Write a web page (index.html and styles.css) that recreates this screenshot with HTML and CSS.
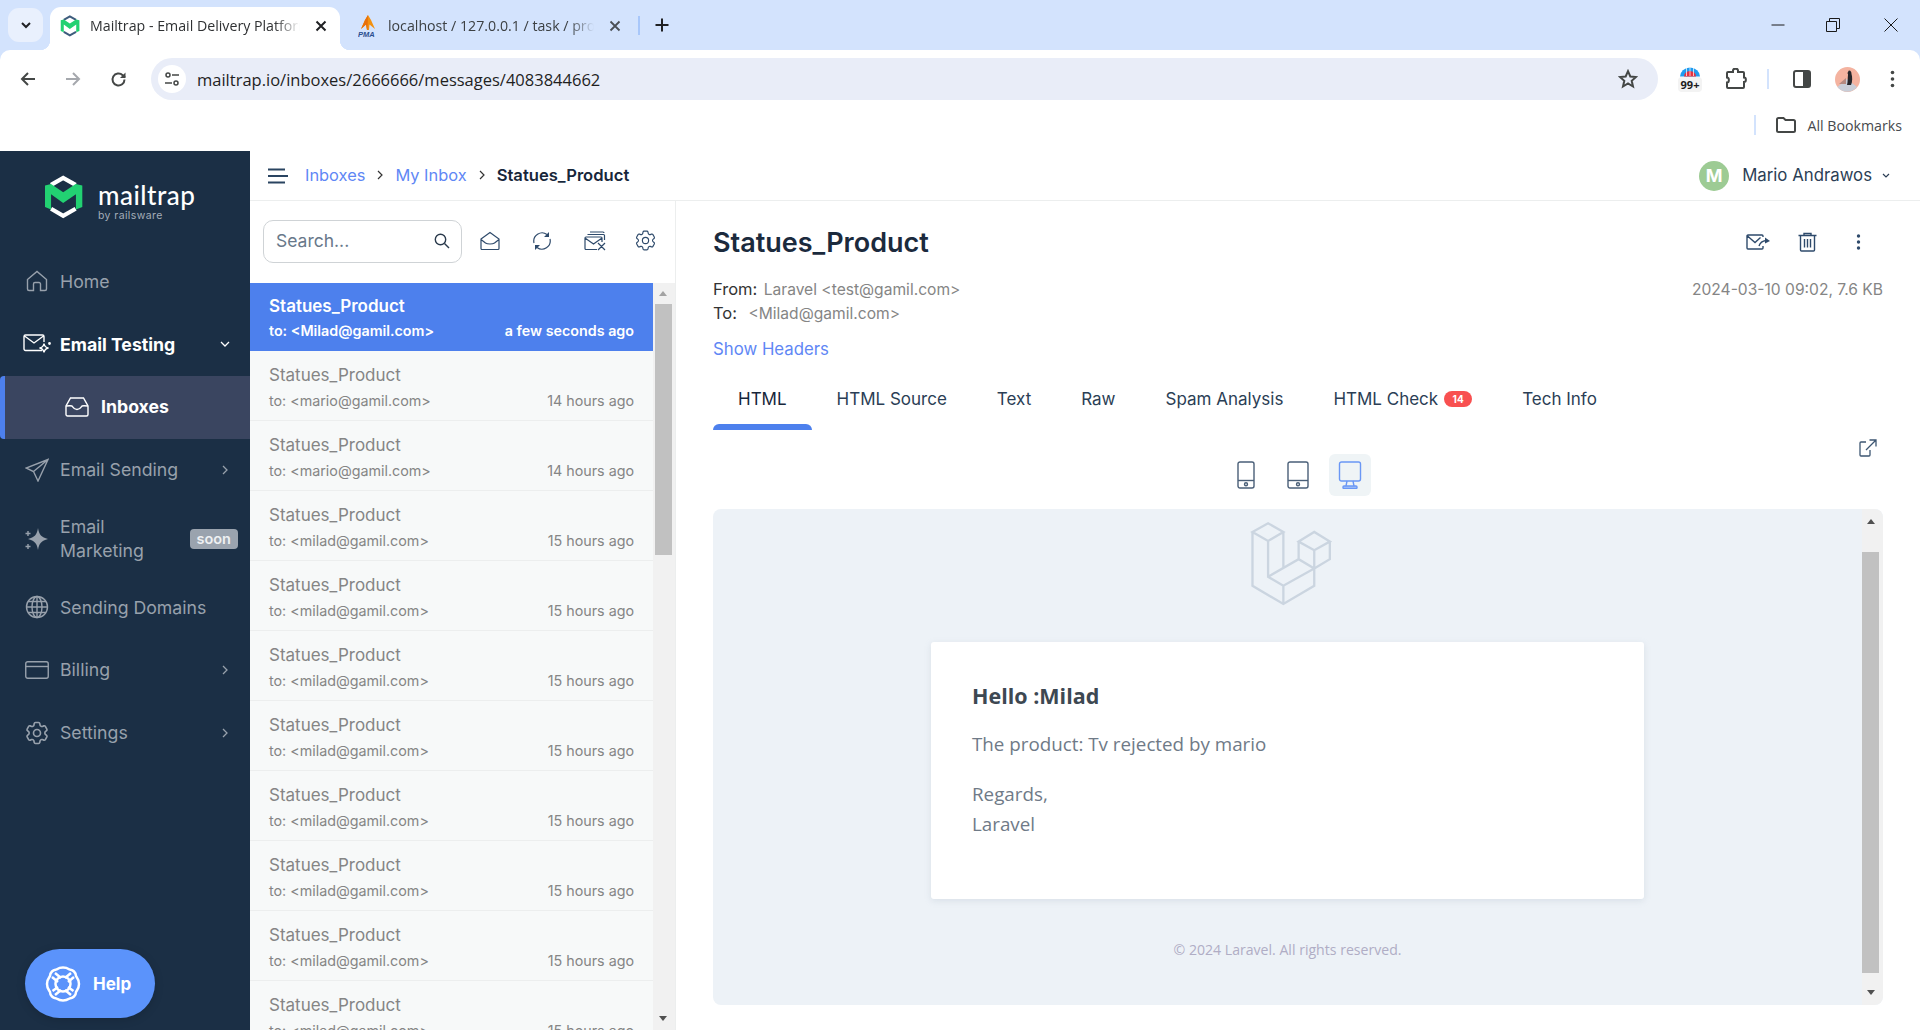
FILE: index.html
```html
<!DOCTYPE html>
<html lang="en">
<head>
    <meta charset="UTF-8">
    <meta name="viewport" content="width=device-width, initial-scale=1.0">
    <title>Mailtrap - Email Delivery Platform</title>
    <link rel="stylesheet" href="styles.css">
</head>
<body>
    <svg class="defs" xmlns="http://www.w3.org/2000/svg">
        <symbol id="gear" viewBox="0 0 24 24">
            <path d="M9.594 3.94c.09-.542.56-.94 1.11-.94h2.593c.55 0 1.02.398 1.11.94l.213 1.281c.063.374.313.686.645.87.074.04.147.083.22.127.325.196.72.257 1.075.124l1.217-.456a1.125 1.125 0 011.37.49l1.296 2.247a1.125 1.125 0 01-.26 1.431l-1.003.827c-.293.24-.438.613-.431.992a6.759 6.759 0 010 .255c-.007.378.138.75.43.99l1.005.828c.424.35.534.954.26 1.43l-1.298 2.247a1.125 1.125 0 01-1.369.491l-1.217-.456c-.355-.133-.75-.072-1.076.124a6.57 6.57 0 01-.22.128c-.331.183-.581.495-.644.869l-.213 1.28c-.09.543-.56.941-1.11.941h-2.594c-.55 0-1.02-.398-1.11-.94l-.213-1.281c-.062-.374-.312-.686-.644-.87a6.52 6.52 0 01-.22-.127c-.325-.196-.72-.257-1.076-.124l-1.217.456a1.125 1.125 0 01-1.369-.49l-1.297-2.247a1.125 1.125 0 01.26-1.431l1.004-.827c.292-.24.437-.613.43-.992a6.932 6.932 0 010-.255c.007-.378-.138-.75-.43-.99l-1.004-.828a1.125 1.125 0 01-.26-1.43l1.297-2.247a1.125 1.125 0 011.37-.491l1.216.456c.356.133.751.072 1.076-.124.072-.044.146-.087.22-.128.332-.183.582-.495.644-.869l.214-1.281z"/>
            <circle cx="12" cy="12" r="3"/>
        </symbol>
        <symbol id="mt-logo" viewBox="130 72 122 138">
            <path class="logo-cap" d="M152 103 190 81 229 103M152 178 190 200 229 178"/>
            <path class="logo-m" d="M133 105 152 100 190 126 229 100 250 105V172L230 180V132L190 160 152 132V180L133 172Z"/>
        </symbol>
    </svg>

    <div class="browser">
        <div class="tabstrip">
            <div class="tab-search">
                <svg width="14" height="14" viewBox="0 0 14 14"><path d="M3 5l4 4 4-4" class="ic-dark2"/></svg>
            </div>
            <div class="tab tab-active">
                <svg class="favicon favicon-mt" width="20" height="22"><use href="#mt-logo"/></svg>
                <span class="tab-title">Mailtrap - Email Delivery Platform</span>
                <svg class="tab-close" width="12" height="12" viewBox="0 0 12 12"><path d="M1.5 1.5l9 9M10.5 1.5l-9 9" class="ic-dark2"/></svg>
            </div>
            <div class="tab">
                <svg class="favicon" width="20" height="24" viewBox="0 0 20 24">
                    <path d="M10 1 13 6 17 15 11.500 10.500 11 16H9L8 10.500 3 15 7 6Z" fill="#f29111"/>
                    <path d="M10 1 9.500 16H9L8 10.500 3 15 7 6Z" fill="#e8700a"/>
                    <text x="0" y="23" class="pma">PMA</text>
                </svg>
                <span class="tab-title tab-title-2">localhost / 127.0.0.1 / task / products</span>
                <svg class="tab-close" width="12" height="12" viewBox="0 0 12 12"><path d="M1.500 1.500l9 9M10.500 1.500l-9 9" class="ic-gray"/></svg>
            </div>
            <span class="tab-sep"></span>
            <svg class="tab-new" width="14" height="14" viewBox="0 0 14 14"><path d="M7 .5v13M.5 7h13" class="ic-dark2"/></svg>
            <div class="win-controls">
                <svg class="win-min" width="14" height="14" viewBox="0 0 14 14"><path d="M.5 7h13" class="ic-thin"/></svg>
                <svg width="14" height="14" viewBox="0 0 14 14"><path d="M.5 3.500h10v10H.5zM3.500 3.500v-3h10v10h-3" class="ic-thin"/></svg>
                <svg width="14" height="14" viewBox="0 0 14 14"><path d="M.5.5l13 13M13.500.5l-13 13" class="ic-thin"/></svg>
            </div>
        </div>

        <div class="toolbar">
            <svg class="tb-back" width="16" height="16" viewBox="0 0 16 16"><path d="M15 8H2M8 2 2 8l6 6" class="ic-tool"/></svg>
            <svg class="tb-fwd" width="16" height="16" viewBox="0 0 16 16"><path d="M1 8h13M8 2l6 6-6 6" class="ic-tool-off"/></svg>
            <svg class="tb-reload" width="17" height="17" viewBox="0 0 17 17"><path d="M14.500 8.500a6 6 0 1 1-1.800-4.300L15 6.500" class="ic-tool"/><path d="M15.500 1.500v5.500H10" class="ic-tool-fill"/></svg>
            <div class="omnibox">
                <span class="site-info">
                    <svg width="16" height="16" viewBox="0 0 16 16"><circle cx="4" cy="4" r="2" class="ic-tool-thin"/><path d="M8 4h7M1 12h7" class="ic-tool-thin"/><circle cx="12" cy="12" r="2" class="ic-tool-thin"/></svg>
                </span>
                <span class="url">mailtrap.io/inboxes/2666666/messages/4083844662</span>
                <svg class="star" width="20" height="20" viewBox="0 0 20 20"><path d="M10 2.200 12.300 7.500 18 8 13.700 11.800 15 17.500 10 14.500 5 17.500 6.300 11.800 2 8 7.700 7.500Z" class="ic-tool"/></svg>
            </div>
            <div class="ext-icon">
                <svg width="20" height="10" viewBox="0 0 20 10"><path d="M0 9.500a10 9 0 0 1 20 0z" fill="#1e9bf0"/><path d="M4 9.500a6 5.500 0 0 1 12 0z" fill="#e5303f"/><path d="M6.500 1v8M10 0v9M13.500 1v8" class="ic-white"/></svg>
                <span class="ext-badge">99+</span>
            </div>
            <svg class="tb-puzzle" width="22" height="22" viewBox="0 0 22 22"><path d="M8 2.500c0-2.500 5-2.500 5 0V4h5a1 1 0 0 1 1 1v4.500c2.500 0 2.500 4.500 0 4.500v5a1 1 0 0 1-1 1H3a1 1 0 0 1-1-1v-4.500c2.500 0 2.500-5 0-5V5a1 1 0 0 1 1-1h5z" class="ic-tool"/></svg>
            <span class="tb-sep"></span>
            <svg class="tb-panel" width="18" height="18" viewBox="0 0 18 18"><rect x="1" y="1" width="16" height="16" rx="2" class="ic-tool"/><path d="M10 1h6a1 1 0 0 1 1 1v14a1 1 0 0 1-1 1h-6z" fill="#444746"/></svg>
            <svg class="tb-avatar" width="25" height="25" viewBox="0 0 25 25">
                <circle cx="12.500" cy="12.500" r="12.500" fill="#f4b3a0"/>
                <path d="M2.400 20 12 12l10 8a12.500 12.500 0 0 1-19.600 0z" fill="#c9ced8"/>
                <path d="M14 3.500c2 0 2.500 2 2.500 3.500 1 3 1 8-.5 11h-4c1-3 .5-7 1-10 .2-1-.5-1.500-.5-2 .5-1 1-2.500 1.500-2.500z" fill="#26262b"/>
                <path d="M4 17l7-6v6z" fill="#b58a80"/>
            </svg>
            <svg class="tb-menu" width="5" height="18" viewBox="0 0 5 18"><circle cx="2.500" cy="2.500" r="1.800"/><circle cx="2.500" cy="9" r="1.800"/><circle cx="2.500" cy="15.500" r="1.800"/></svg>
        </div>

        <div class="bookmarks">
            <span class="bm-sep"></span>
            <svg width="20" height="16" viewBox="0 0 20 16"><path d="M1 2.500a1.500 1.500 0 0 1 1.500-1.500h5l2 2h8a1.500 1.500 0 0 1 1.500 1.500v9a1.500 1.500 0 0 1-1.500 1.500h-15A1.500 1.500 0 0 1 1 13.500z" class="ic-tool"/></svg>
            <span class="bm-label">All Bookmarks</span>
        </div>
    </div>

    <div class="app">
        <aside class="sidebar">
            <div class="brand">
                <svg class="brand-mark" width="41" height="44"><use href="#mt-logo"/></svg>
                <div class="brand-text">
                    <div class="brand-name">mailtrap</div>
                    <div class="brand-by">by railsware</div>
                </div>
            </div>
            <nav class="nav">
                <a class="nav-item">
                    <svg class="nav-icon" width="24" height="24" viewBox="0 0 24 24"><path d="M2.500 10.500 12 2.500l9.500 8V20a1.500 1.500 0 0 1-1.500 1.500h-4.500V15a1.500 1.500 0 0 0-1.500-1.500h-4A1.500 1.500 0 0 0 8.500 15v6.500H4A1.500 1.500 0 0 1 2.500 20z"/></svg>
                    <span>Home</span>
                </a>
                <a class="nav-item nav-open">
                    <svg class="nav-icon nav-icon-wide" width="28" height="20" viewBox="0 0 28 20"><path d="M19 16.500H2.500A1.500 1.500 0 0 1 1 15V2.500A1.500 1.500 0 0 1 2.500 1h17A1.500 1.500 0 0 1 21 2.500V8M1.500 2l9.500 7 9.500-7"/><path d="M21 9.500c.5 3 1.500 4 4.500 4.500-3 .5-4 1.500-4.500 4.500-.5-3-1.500-4-4.500-4.500 3-.5 4-1.500 4.500-4.500z"/><circle cx="26.500" cy="9.500" r=".7"/></svg>
                    <span>Email Testing</span>
                    <svg class="chev" width="10" height="10" viewBox="0 0 10 10"><path d="M1 3l4 4 4-4"/></svg>
                </a>
                <a class="nav-sub">
                    <svg class="nav-icon" width="24" height="20" viewBox="0 0 24 20"><path d="M5.500 1h13L23 9v8.500a1.500 1.500 0 0 1-1.500 1.500h-19A1.500 1.500 0 0 1 1 17.500V9z"/><path d="M1 9c0 0 5-.5 6 0 1 1 1.500 3.500 5 3.500s4-2.500 5-3.500c1-.5 6 0 6 0"/></svg>
                    <span>Inboxes</span>
                </a>
                <a class="nav-item nav-item-up">
                    <svg class="nav-icon" width="24" height="24" viewBox="0 0 24 24"><path d="M23 1.500 1 10l7.500 3.500L13 23zM23 1.500 8.500 13.500"/></svg>
                    <span>Email Sending</span>
                    <svg class="chev" width="10" height="10" viewBox="0 0 10 10"><path d="M3 1l4 4-4 4"/></svg>
                </a>
                <a class="nav-item nav-item-tall">
                    <svg class="nav-icon" width="24" height="24" viewBox="0 0 24 24"><path class="filled" d="M13 1c1 6.500 3.500 9.500 10 11-6.500 1.500-9 4.500-10 11-1-6.500-3.500-9.500-10-11 6.500-1.500 9-4.500 10-11z"/><path d="M3 4v5M.5 6.500h5M3 17v5M.5 19.500h5"/></svg>
                    <span class="nav-two-line">Email<br>Marketing</span>
                    <span class="soon">soon</span>
                </a>
                <a class="nav-item">
                    <svg class="nav-icon" width="24" height="24" viewBox="0 0 24 24"><circle cx="12" cy="12" r="10.500"/><ellipse cx="12" cy="12" rx="5" ry="10.500"/><path d="M12 1.500v21M1.500 12h21M3 6.500h18M3 17.500h18"/></svg>
                    <span>Sending Domains</span>
                </a>
                <a class="nav-item nav-item-up">
                    <svg class="nav-icon" width="24" height="18" viewBox="0 0 24 18"><rect x=".75" y=".75" width="22.500" height="16.500" rx="2"/><path d="M1 5.500h22"/></svg>
                    <span>Billing</span>
                    <svg class="chev" width="10" height="10" viewBox="0 0 10 10"><path d="M3 1l4 4-4 4"/></svg>
                </a>
                <a class="nav-item nav-item-up">
                    <svg class="nav-icon nav-gear" width="28" height="28"><use href="#gear"/></svg>
                    <span>Settings</span>
                    <svg class="chev" width="10" height="10" viewBox="0 0 10 10"><path d="M3 1l4 4-4 4"/></svg>
                </a>
            </nav>
            <button class="help">
                <svg width="38" height="38" viewBox="0 0 38 38"><path d="M19 2.500c4 0 5 1 6.500 2 1 .5 2.500 0 4.500 2s2 3.500 2 4.500c1 1.500 3 3.500 3 8s-2 6-3 8c0 1 0 2.500-2 4.500s-3.500 1.500-4.500 2c-1.500 1-2.500 2-6.500 2s-5-1-6.500-2c-1-.5-2.500 0-4.500-2s-2-3.500-2-4.500c-1-2-3-3.500-3-8s2-6.500 3-8c0-1 0-2.500 2-4.500s3.500-1.500 4.500-2c1.500-1 2.500-2 6.500-2z"/><circle cx="19" cy="19" r="7.500"/><path d="M8 12l6 5M8.500 26l5.500-4M30 12l-6 5M29.500 26l-5.500-4M11 8l6 5M27 8l-6 5M11 30l6-5M27 30l-6-5"/></svg>
                <span>Help</span>
            </button>
        </aside>

        <main class="main">
            <header class="topbar">
                <svg class="hamburger" width="20" height="16" viewBox="0 0 20 16"><path d="M0 1.500h17M0 8h20M0 14.500h17"/></svg>
                <a class="crumb">Inboxes</a>
                <svg class="crumb-chev" width="8" height="10" viewBox="0 0 8 10"><path d="M2 1l4 4-4 4"/></svg>
                <a class="crumb">My Inbox</a>
                <svg class="crumb-chev" width="8" height="10" viewBox="0 0 8 10"><path d="M2 1l4 4-4 4"/></svg>
                <strong class="crumb-current">Statues_Product</strong>
                <div class="user">
                    <span class="user-avatar">M</span>
                    <span class="user-name">Mario Andrawos</span>
                    <svg class="user-chev" width="8" height="6" viewBox="0 0 8 6"><path d="M1 1l3 3 3-3"/></svg>
                </div>
            </header>

            <div class="content">
                <section class="messages">
                    <div class="msg-tools">
                        <div class="search">
                            <span>Search...</span>
                            <svg width="16" height="16" viewBox="0 0 16 16"><circle cx="6.500" cy="6.500" r="5.200"/><path d="M10.500 10.500 15 15"/></svg>
                        </div>
                        <div class="msg-icons">
                            <svg width="20" height="20" viewBox="0 0 20 20"><path d="M1 8 10 1.500 19 8v9.500a1 1 0 0 1-1 1H2a1 1 0 0 1-1-1zM1 8.500l4.500 3.500c1 .7 2 1 4.500 1s3.500-.3 4.500-1L19 8.500"/></svg>
                            <svg width="20" height="20" viewBox="0 0 20 20"><path d="M2 12a8.300 8.300 0 0 1 13-8.500M18 8a8.300 8.300 0 0 1-13 8.500"/><path class="filled" d="M17 1v5h-5zM3 19v-5h5z"/></svg>
                            <svg width="22" height="20" viewBox="0 0 22 20"><path d="M13 18.500H2a1 1 0 0 1-1-1V7a1 1 0 0 1 1-1h15a1 1 0 0 1 1 1v4M1 7l8.500 6L18 7M3.500 3.500h16a1 1 0 0 1 1 1V9M6 1h13a1 1 0 0 1 1 1M14 12l7 7M21 12l-7 7"/></svg>
                            <svg class="msg-gear" width="25" height="25"><use href="#gear"/></svg>
                        </div>
                    </div>
                    <div class="msg-scroll">
                        <ul class="msg-list">
                            <li class="msg msg-active">
                                <div class="msg-title">Statues_Product</div>
                                <div class="msg-line"><span>to: &lt;Milad@gamil.com&gt;</span><span>a few seconds ago</span></div>
                            </li>
                            <li class="msg">
                                <div class="msg-title">Statues_Product</div>
                                <div class="msg-line"><span>to: &lt;mario@gamil.com&gt;</span><span>14 hours ago</span></div>
                            </li>
                            <li class="msg">
                                <div class="msg-title">Statues_Product</div>
                                <div class="msg-line"><span>to: &lt;mario@gamil.com&gt;</span><span>14 hours ago</span></div>
                            </li>
                            <li class="msg">
                                <div class="msg-title">Statues_Product</div>
                                <div class="msg-line"><span>to: &lt;milad@gamil.com&gt;</span><span>15 hours ago</span></div>
                            </li>
                            <li class="msg">
                                <div class="msg-title">Statues_Product</div>
                                <div class="msg-line"><span>to: &lt;milad@gamil.com&gt;</span><span>15 hours ago</span></div>
                            </li>
                            <li class="msg">
                                <div class="msg-title">Statues_Product</div>
                                <div class="msg-line"><span>to: &lt;milad@gamil.com&gt;</span><span>15 hours ago</span></div>
                            </li>
                            <li class="msg">
                                <div class="msg-title">Statues_Product</div>
                                <div class="msg-line"><span>to: &lt;milad@gamil.com&gt;</span><span>15 hours ago</span></div>
                            </li>
                            <li class="msg">
                                <div class="msg-title">Statues_Product</div>
                                <div class="msg-line"><span>to: &lt;milad@gamil.com&gt;</span><span>15 hours ago</span></div>
                            </li>
                            <li class="msg">
                                <div class="msg-title">Statues_Product</div>
                                <div class="msg-line"><span>to: &lt;milad@gamil.com&gt;</span><span>15 hours ago</span></div>
                            </li>
                            <li class="msg">
                                <div class="msg-title">Statues_Product</div>
                                <div class="msg-line"><span>to: &lt;milad@gamil.com&gt;</span><span>15 hours ago</span></div>
                            </li>
                            <li class="msg">
                                <div class="msg-title">Statues_Product</div>
                                <div class="msg-line"><span>to: &lt;milad@gamil.com&gt;</span><span>15 hours ago</span></div>
                            </li>
                        </ul>
                        <div class="scrollbar scrollbar-list">
                            <span class="sb-arrow sb-up sb-faded"></span>
                            <span class="sb-thumb"></span>
                            <span class="sb-arrow sb-down"></span>
                        </div>
                    </div>
                </section>

                <section class="detail">
                    <div class="detail-head">
                        <h1>Statues_Product</h1>
                        <div class="detail-actions">
                            <svg width="24" height="16" viewBox="0 0 24 16"><path d="M17 12v2a1 1 0 0 1-1 1H2a1 1 0 0 1-1-1V2a1 1 0 0 1 1-1h14a1 1 0 0 1 1 1v1M1.500 2 9 8.500l5.500-5M13 12c1-3 3-5 7-5.500"/><path class="filled" d="M19 3.500 24 7l-5 2.500z"/></svg>
                            <svg width="19" height="20" viewBox="0 0 19 20"><path d="M.5 3.500h18M6 3V1.500h7V3M2.500 3.500V18a1 1 0 0 0 1 1h12a1 1 0 0 0 1-1V3.500M6.500 7v8.500M9.500 7v8.500M12.500 7v8.500"/></svg>
                            <svg class="filled-only" width="5" height="16" viewBox="0 0 5 16"><circle cx="2.500" cy="2" r="1.700"/><circle cx="2.500" cy="8" r="1.700"/><circle cx="2.500" cy="14" r="1.700"/></svg>
                        </div>
                    </div>
                    <div class="meta">
                        <div class="meta-lines">
                            <div><span class="meta-label">From:</span> <span class="meta-value">Laravel &lt;test@gamil.com&gt;</span></div>
                            <div><span class="meta-label meta-to">To:</span> <span class="meta-value">&lt;Milad@gamil.com&gt;</span></div>
                        </div>
                        <div class="meta-date">2024-03-10 09:02, 7.6 KB</div>
                    </div>
                    <a class="show-headers">Show Headers</a>

                    <div class="tabs">
                        <a class="view-tab view-tab-active">HTML</a>
                        <a class="view-tab">HTML Source</a>
                        <a class="view-tab">Text</a>
                        <a class="view-tab">Raw</a>
                        <a class="view-tab">Spam Analysis</a>
                        <a class="view-tab">HTML Check<span class="tab-badge">14</span></a>
                        <a class="view-tab">Tech Info</a>
                    </div>

                    <div class="device-row">
                        <div class="devices">
                            <span class="device">
                                <svg width="18" height="28" viewBox="0 0 18 28"><rect x="1" y="1" width="16" height="26" rx="2"/><path d="M1 19.500h16"/><circle cx="9" cy="23.300" r="1.500"/></svg>
                            </span>
                            <span class="device">
                                <svg width="22" height="28" viewBox="0 0 22 28"><rect x="1" y="1" width="20" height="26" rx="2"/><path d="M1 19.500h20"/><circle cx="11" cy="23.300" r="1.500"/></svg>
                            </span>
                            <span class="device device-active">
                                <svg width="24" height="28" viewBox="0 0 24 28"><rect x="1.500" y="1" width="21" height="19" rx="2"/><path d="M9 20l-1 5M15 20l1 5"/><rect x="5" y="25" width="14" height="2.500" rx="1" class="device-base"/></svg>
                            </span>
                        </div>
                        <svg class="external" width="18" height="18" viewBox="0 0 18 18"><path d="M7 3H2a1 1 0 0 0-1 1v12a1 1 0 0 0 1 1h8a1 1 0 0 0 1-1v-5M7 11 17 1M10.500 1H17v6.500"/></svg>
                    </div>

                    <div class="preview">
                        <div class="mail">
                            <svg class="laravel" width="82" height="85" viewBox="150 60 246 256">
                                <path d="M157 93 204 67 250 93 204 120ZM157 93V255L250 310 343 255V203M204 120V228L250 255 343 203 296 175 204 228M250 93V203M250 255V310M296 122 343 93 390 122 343 148ZM296 122V175M390 122V175L343 203M343 148V255"/>
                            </svg>
                            <div class="mail-card">
                                <h2>Hello :Milad</h2>
                                <p>The product: Tv rejected by mario</p>
                                <p>Regards,<br>Laravel</p>
                            </div>
                            <div class="mail-foot">© 2024 Laravel. All rights reserved.</div>
                        </div>
                        <div class="scrollbar scrollbar-mail">
                            <span class="sb-arrow sb-up"></span>
                            <span class="sb-thumb"></span>
                            <span class="sb-arrow sb-down"></span>
                        </div>
                    </div>
                </section>
            </div>
        </main>
    </div>
</body>
</html>
```

FILE: styles.css
```css
* {
    box-sizing: border-box;
}
html, body {
    margin: 0;
    height: 1030px;
    overflow: hidden;
}
body {
    font-family: Inter, "Liberation Sans", sans-serif;
    background: #fff;
    color: #1b2f45;
}
a {
    text-decoration: none;
}
svg {
    display: block;
    flex: none;
}
.defs {
    display: none;
}
.filled {
    fill: currentColor;
    stroke: none;
}
.logo-cap {
    fill: none;
    stroke: currentColor;
    stroke-width: 13;
}
.logo-m {
    fill: #22d172;
}

/* browser chrome */
.browser {
    height: 151px;
    font-family: "Open Sans", "Liberation Sans", sans-serif;
    background: #d3e3fd;
}
.tabstrip {
    height: 50px;
    display: flex;
    align-items: flex-end;
    padding-left: 8px;
}
.tab-search {
    width: 35px;
    height: 34px;
    margin-bottom: 8px;
    margin-right: 7px;
    border-radius: 11px;
    background: #e9f0fd;
    display: flex;
    align-items: center;
    justify-content: center;
}
.tab {
    width: 290px;
    height: 43px;
    display: flex;
    align-items: center;
    padding-left: 10px;
    padding-bottom: 6px;
    font-size: 14.200px;
    color: #3c4043;
    position: relative;
}
.tab-active {
    background: #fff;
    border-radius: 11px 11px 0 0;
    color: #2f3133;
}
.tab-active::before, .tab-active::after {
    content: "";
    position: absolute;
    bottom: 0;
    width: 10px;
    height: 10px;
    background: radial-gradient(circle at 0 0, transparent 10px, #fff 10.5px);
}
.tab-active::before {
    left: -10px;
}
.tab-active::after {
    right: -10px;
    background: radial-gradient(circle at 100% 0, transparent 10px, #fff 10.5px);
}
.tab:nth-child(3) {
    width: 298px;
    padding-left: 18px;
}
.favicon-mt {
    color: #3e5c7d;
}
.pma {
    font: italic bold 7.5px "Liberation Sans", sans-serif;
    fill: #2b4f8f;
}
.tab-title {
    width: 210px;
    margin-left: 10px;
    white-space: nowrap;
    overflow: hidden;
    -webkit-mask-image: linear-gradient(to right, #000 88%, transparent);
    mask-image: linear-gradient(to right, #000 88%, transparent);
}
.tab-title-2 {
    width: 206px;
}
.tab-close {
    margin-left: 15px;
}
.tab-sep {
    width: 2px;
    height: 19px;
    margin-bottom: 15px;
    background: #a8c7fa;
}
.tab-new {
    margin-left: 15px;
    margin-bottom: 18px;
}
.win-controls {
    margin-left: auto;
    padding-right: 22px;
    margin-bottom: 18px;
    display: flex;
    gap: 44px;
}
.win-min {
    margin-right: -3px;
}
.ic-dark2 {
    fill: none;
    stroke: #202124;
    stroke-width: 2;
}
.ic-gray {
    fill: none;
    stroke: #4a4f55;
    stroke-width: 1.800;
}
.ic-thin {
    fill: none;
    stroke: #1a1a1a;
    stroke-width: 1;
}
.ic-tool {
    fill: none;
    stroke: #444746;
    stroke-width: 2;
}
.ic-tool-thin {
    fill: none;
    stroke: #444746;
    stroke-width: 1.500;
}
.ic-tool-fill {
    fill: #444746;
    stroke: none;
}
.ic-tool-off {
    fill: none;
    stroke: #a5a8ad;
    stroke-width: 2;
}
.ic-white {
    stroke: #fff;
    stroke-width: .7;
}
.toolbar {
    height: 50px;
    background: #fff;
    border-radius: 10px 10px 0 0;
    display: flex;
    align-items: center;
    padding-top: 8px;
    padding-left: 20px;
}
.tb-fwd {
    margin-left: 29px;
}
.tb-reload {
    margin-left: 29px;
}
.omnibox {
    width: 1507px;
    height: 42px;
    margin-left: 24px;
    border-radius: 21px;
    background: #e9edf8;
    display: flex;
    align-items: center;
    padding-left: 7px;
    padding-right: 20px;
}
.site-info {
    width: 28px;
    height: 28px;
    border-radius: 50%;
    background: #fff;
    display: flex;
    align-items: center;
    justify-content: center;
}
.url {
    margin-left: 11px;
    font-size: 16.500px;
    color: #1f1f1f;
}
.star {
    margin-left: auto;
}
.ext-icon {
    width: 28px;
    margin-left: 18px;
    display: flex;
    flex-direction: column;
    align-items: center;
}
.ext-badge {
    font: bold 11px/15px "Noto Sans", sans-serif;
    color: #1d1d1d;
    background: #f3f3f3;
    border-radius: 4px;
    padding: 0 3px;
}
.tb-puzzle {
    margin-left: 21px;
}
.tb-sep {
    width: 2px;
    height: 20px;
    margin-left: 20px;
    background: #d3e3fd;
}
.tb-panel {
    margin-left: 24px;
}
.tb-avatar {
    margin-left: 24px;
}
.tb-menu {
    margin-left: 30px;
    fill: #444746;
}
.bookmarks {
    height: 51px;
    background: #fff;
    display: flex;
    align-items: center;
    justify-content: flex-end;
    padding-bottom: 1px;
    padding-right: 18px;
}
.bm-sep {
    width: 2px;
    height: 20px;
    margin-right: 20px;
    background: #d3e3fd;
}
.bm-label {
    margin-left: 11px;
    font-size: 14.200px;
    color: #474a4d;
}

/* app */
.app {
    display: flex;
    height: 879px;
}
.sidebar {
    width: 250px;
    flex: none;
    background: #1b2f45;
    display: flex;
    flex-direction: column;
    color: #fff;
}
.brand {
    height: 99px;
    display: flex;
    padding-top: 24px;
    padding-left: 43px;
}
.brand-text {
    margin-left: 14px;
    padding-top: 5px;
}
.brand-name {
    font: 500 26px/30px Lato, sans-serif;
    letter-spacing: .5px;
    color: #fff;
}
.brand-by {
    font-size: 10.500px;
    line-height: 12px;
    letter-spacing: .4px;
    color: #a3adb8;
}
.nav {
    display: flex;
    flex-direction: column;
}
.nav-item, .nav-sub {
    display: flex;
    align-items: center;
    height: 63px;
    font-size: 17.700px;
    color: #98a1ac;
    padding-left: 25px;
    padding-right: 20px;
    padding-bottom: 1px;
}
.nav-item-tall {
    height: 74px;
}
.nav-item-up, .nav-sub {
    padding-bottom: 2px;
}
.nav-icon {
    fill: none;
    stroke: currentColor;
    stroke-width: 1.400;
    margin-right: 11px;
}
.nav-icon-wide {
    margin-left: -2px;
    margin-right: 9px;
}
.nav-gear {
    margin-left: -2px;
    margin-right: 9px;
}
.chev {
    margin-left: auto;
    fill: none;
    stroke: currentColor;
    stroke-width: 1.300;
}
.nav-open {
    color: #fff;
    font-weight: 700;
}
.nav-sub {
    color: #fff;
    font-weight: 700;
    background: #3a4560;
    border-left: 5px solid #4d80ed;
    border-radius: 4px 0 0 4px;
    padding-left: 60px;
}
.nav-sub .nav-icon {
    margin-right: 12px;
}
.nav-two-line {
    line-height: 24px;
}
.soon {
    margin-left: auto;
    margin-right: -8px;
    padding: 0 7px;
    height: 20px;
    border-radius: 4px;
    background: #9aa3ae;
    font-size: 14.500px;
    font-weight: 600;
    line-height: 20px;
    color: #eef0f2;
}
.help {
    margin: auto 0 12px 25px;
    width: 130px;
    height: 69px;
    border: none;
    border-radius: 35px;
    background: #5b93fb;
    box-shadow: 0 2px 10px rgba(0, 0, 0, .15);
    color: #fff;
    font: 700 17px Inter, sans-serif;
    display: flex;
    align-items: center;
    padding: 0 0 0 19px;
}
.help svg {
    fill: none;
    stroke: #fff;
    stroke-width: 2.500;
    margin-right: 11px;
}
.main {
    flex: 1;
    min-width: 0;
    display: flex;
    flex-direction: column;
}
.topbar {
    height: 50px;
    flex: none;
    border-bottom: 1px solid #eceeee;
    display: flex;
    align-items: center;
    padding-left: 18px;
    padding-right: 30px;
    padding-bottom: 2px;
    font-size: 16.400px;
}
.hamburger {
    fill: none;
    stroke: #2a4461;
    stroke-width: 2;
    margin-right: 17px;
    margin-top: 2px;
}
.crumb {
    color: #5f87f5;
}
.crumb-chev {
    margin: 0 11px;
    fill: none;
    stroke: #333;
    stroke-width: 1.200;
}
.crumb-current {
    font-size: 16.600px;
    font-weight: 600;
    color: #17263a;
}
.user {
    margin-left: auto;
    display: flex;
    align-items: center;
    margin-top: 2px;
}
.user-avatar {
    width: 30px;
    height: 30px;
    border-radius: 50%;
    background: #9dcb94;
    color: #fff;
    font-size: 18px;
    font-weight: 700;
    display: flex;
    align-items: center;
    justify-content: center;
}
.user-name {
    margin-left: 13px;
    margin-bottom: 2px;
    font-size: 16.800px;
    color: #2b3e55;
}
.user-chev {
    margin-left: 10px;
    fill: none;
    stroke: #2b3e55;
    stroke-width: 1.200;
}
.content {
    flex: 1;
    min-height: 0;
    display: flex;
}

/* message list */
.messages {
    width: 426px;
    flex: none;
    border-right: 1px solid #eceeee;
    display: flex;
    flex-direction: column;
}
.msg-tools {
    height: 82px;
    flex: none;
    display: flex;
    padding: 19px 0 0 13px;
}
.search {
    width: 199px;
    height: 43px;
    border: 1px solid #cfd3d6;
    border-radius: 10px;
    display: flex;
    align-items: center;
    justify-content: space-between;
    padding: 0 12px 2px;
    font-size: 17.500px;
    color: #68788a;
}
.search svg {
    fill: none;
    stroke: #2a3a4c;
    stroke-width: 1.400;
    margin-right: -1px;
}
.msg-icons {
    margin-left: 18px;
    height: 41px;
    display: flex;
    align-items: center;
    gap: 32px;
    color: #2e4a6b;
}
.msg-icons svg {
    fill: none;
    stroke: #2e4a6b;
    stroke-width: 1.200;
}
.msg-icons .filled {
    stroke: none;
    fill: #2e4a6b;
}
.msg-icons .msg-gear {
    margin-left: -5px;
    stroke-width: 1.100;
}
.msg-scroll {
    flex: 1;
    min-height: 0;
    display: flex;
}
.msg-list {
    flex: 1;
    margin: 0;
    padding: 0;
    list-style: none;
    overflow: hidden;
}
.msg {
    height: 70px;
    padding: 12px 19px 0;
    background: #f7f9f9;
    border-bottom: 1px solid #eceeee;
    color: #858585;
}
.msg-title {
    font-size: 17px;
    line-height: 24px;
}
.msg-line {
    display: flex;
    justify-content: space-between;
    margin-top: 2px;
    font-size: 14.300px;
    line-height: 24px;
}
.msg-active {
    height: 68px;
    padding-top: 11px;
    background: #4d80ed;
    border: none;
    color: #fff;
    font-weight: 600;
}
.msg-active .msg-line {
    margin-top: 1px;
}
.scrollbar {
    display: flex;
    flex-direction: column;
    flex: none;
    background: #f1f1f1;
}
.sb-arrow {
    height: 21px;
    flex: none;
    display: flex;
    align-items: center;
    justify-content: center;
}
.sb-arrow::before {
    content: "";
    border-left: 4.500px solid transparent;
    border-right: 4.500px solid transparent;
}
.sb-up::before {
    border-bottom: 5px solid #505050;
}
.sb-down::before {
    border-top: 5px solid #505050;
}
.sb-faded::before {
    border-bottom-color: #a3a3a3;
}
.sb-thumb {
    background: #c1c1c1;
    width: 17px;
}
.sb-down {
    margin-top: auto;
}
.scrollbar-list {
    width: 22px;
    padding-bottom: 1px;
}
.scrollbar-list .sb-thumb {
    height: 251px;
    margin-left: 2px;
}
.scrollbar-list .sb-arrow {
    padding-right: 2px;
}

/* message detail */
.detail {
    flex: 1;
    min-width: 0;
    padding: 20px 37px 0;
}
.detail-head {
    height: 42px;
    display: flex;
    align-items: center;
    justify-content: space-between;
}
h1 {
    margin: 0;
    font-size: 27px;
    font-weight: 600;
    color: #1b2a3d;
}
.detail-actions {
    display: flex;
    align-items: center;
    padding-right: 22px;
}
.detail-actions svg {
    fill: none;
    stroke: #2e4a6b;
    stroke-width: 1.400;
    color: #2e4a6b;
    margin-left: 28px;
}
.detail-actions .filled-only {
    fill: #2e4a6b;
    stroke: none;
    margin-left: 39px;
}
.meta {
    margin-top: 15px;
    display: flex;
    justify-content: space-between;
    line-height: 23.500px;
    font-size: 15.600px;
}
.meta-label {
    font-size: 16.500px;
    color: #333;
}
.meta-to {
    margin-right: 6px;
}
.meta-value {
    margin-left: 2px;
    color: #858585;
}
.meta-to + .meta-value {
    margin-left: 1px;
}
.meta-date {
    color: #858585;
}
.show-headers {
    display: block;
    margin-top: 12px;
    font-size: 16.800px;
    line-height: 24px;
    color: #5f87f5;
}
.tabs {
    display: flex;
    margin-top: 11px;
}
.view-tab {
    position: relative;
    display: flex;
    align-items: center;
    height: 58px;
    padding: 15px 25px 19px;
    font-size: 17px;
    line-height: 24px;
    color: #2b3e55;
}
.view-tab-active {
    color: #17263a;
}
.view-tab-active::after {
    content: "";
    position: absolute;
    left: 0;
    right: 0;
    bottom: 0;
    height: 6px;
    border-radius: 6px 6px 0 0;
    background: #4d80ed;
}
.tab-badge {
    width: 28px;
    height: 16px;
    margin-left: 6px;
    border-radius: 8px;
    background: #f85050;
    color: #fff;
    font-size: 10px;
    font-weight: 700;
    line-height: 16px;
    text-align: center;
}
.device-row {
    margin-top: 24px;
    display: grid;
    grid-template-columns: 1fr auto 1fr;
}
.devices {
    grid-column: 2;
    display: flex;
    gap: 10px;
}
.device {
    width: 42px;
    height: 42px;
    border-radius: 6px;
    display: flex;
    align-items: center;
    justify-content: center;
    color: #4a5f78;
}
.device svg {
    fill: none;
    stroke: currentColor;
    stroke-width: 1.400;
}
.device-active {
    background: #eff4f6;
    color: #6a97f5;
}
.device-base {
    fill: #a9c4fa;
}
.external {
    grid-column: 3;
    justify-self: end;
    margin-top: -15px;
    margin-right: 6px;
    fill: none;
    stroke: #3d5672;
    stroke-width: 1.300;
}

/* email preview */
.preview {
    margin-top: 13px;
    height: 496px;
    display: flex;
    background: #edf2f7;
    border-radius: 8px;
    overflow: hidden;
}
.mail {
    flex: 1;
    min-width: 0;
    display: flex;
    flex-direction: column;
    align-items: center;
    padding-top: 12px;
    font-family: "Open Sans", "Liberation Sans", sans-serif;
}
.laravel {
    margin-left: 6px;
    fill: none;
    stroke: #cbd5e0;
    stroke-width: 7;
}
.mail-card {
    width: 713px;
    height: 257px;
    margin-top: 36px;
    padding: 38px 41px;
    background: #fff;
    border-radius: 3px;
    box-shadow: 0 2px 6px rgba(160, 174, 192, .25);
}
.mail-card h2 {
    margin: 0 0 17px;
    font-size: 21.500px;
    font-weight: 700;
    line-height: 32px;
    color: #3d4852;
}
.mail-card p {
    margin: 0 0 20px;
    font-size: 18.800px;
    line-height: 30px;
    color: #6f7a87;
}
.mail-foot {
    margin-top: 41px;
    font-size: 14.100px;
    line-height: 20px;
    color: #b0adc5;
}
.scrollbar-mail {
    width: 21px;
    border-radius: 0 8px 8px 0;
}
.scrollbar-mail .sb-arrow {
    height: 24px;
    padding-right: 3px;
}
.scrollbar-mail .sb-thumb {
    height: 421px;
    margin-top: 19px;
}
.scrollbar-mail .sb-down {
    margin-bottom: 1px;
}
```
